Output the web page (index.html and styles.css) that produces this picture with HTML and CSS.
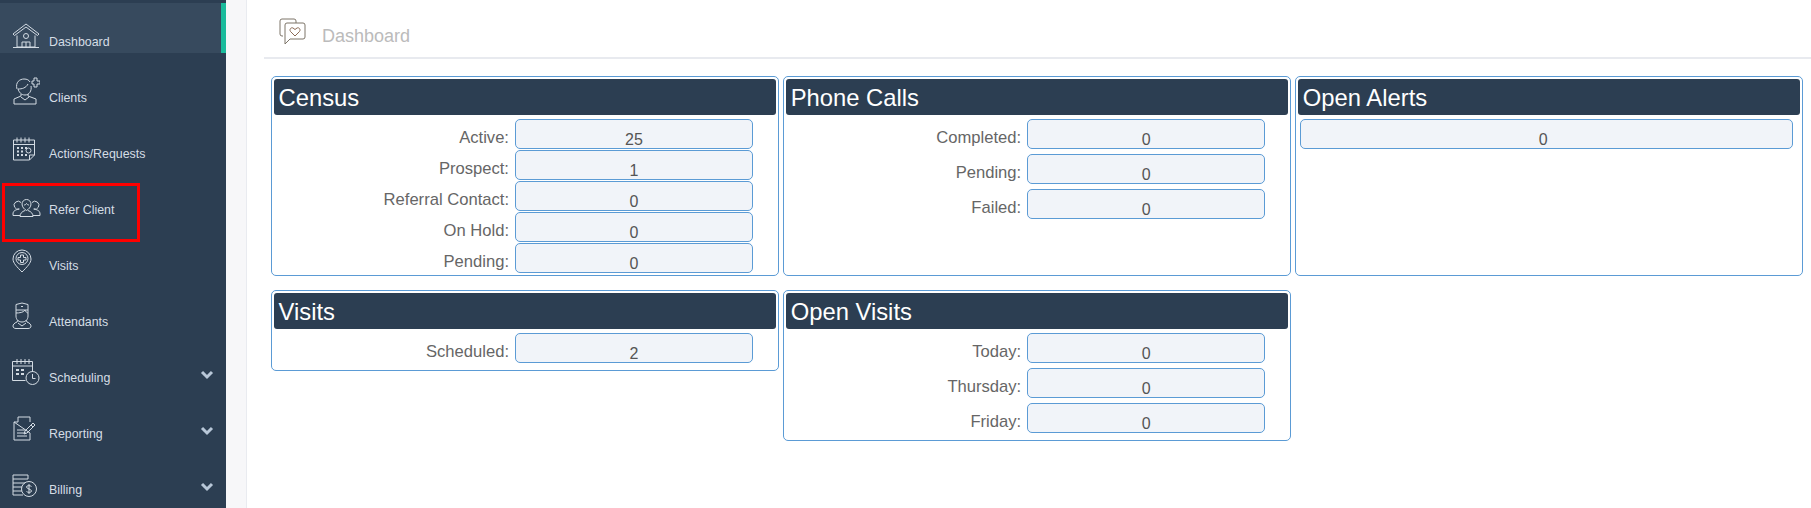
FILE: index.html
```html
<!DOCTYPE html>
<html lang="en">
<head>
    <meta charset="UTF-8">
    <title>Dashboard</title>
    <link rel="stylesheet" href="styles.css">
</head>
<body>
<div class="app-wrap">
    <aside class="sidebar">
        <a class="nav-item active">
            <svg class="nav-icon" width="28" height="26" viewBox="0 0 28 26"><path d="M1 11 14 1l13 10-1.500 1.500L14 4 2.500 12.500zM5 12.500V24h18V12.500M1 24.500h26M10 24v-5h8v5M14 19v5"/><circle cx="14" cy="13" r="2.500"/></svg>
            <span>Dashboard</span>
        </a>
        <a class="nav-item">
            <svg class="nav-icon" width="28" height="28" viewBox="0 0 28 28"><path d="M5 12C3 5 8 2 12 2c3 0 5 1 6 3M19 9c1 5-2 9-6 9s-6-3-7-6c4 0 8-1 10-5M9 17v2l-7 3v5h22v-5l-8-3v-2M9 20l4 3 4-3M20 4h2V1h3v3h3v3h-3v3h-3V7h-2z"/></svg>
            <span>Clients</span>
        </a>
        <a class="nav-item">
            <svg class="nav-icon" width="24" height="24" viewBox="0 0 24 24"><path d="M1.500 23V3h21v15l-5 5zM1.500 7.500h21M5 .5v5M9 .5v5M13 .5v5M17 .5v5M22.500 18h-5v5"/><path class="dots" d="M5 11h2M9 11h2M13 11h2M5 14.500h2M9 14.500h2M5 18h2M9 18h2M13 18h2"/><circle cx="16.500" cy="13.500" r="2.500"/></svg>
            <span>Actions/Requests</span>
        </a>
        <a class="nav-item">
            <svg class="nav-icon" width="29" height="19" viewBox="0 0 29 19"><path d="M9 4.500a4 4 0 1 0-1.500 6.500M20 4.500a4 4 0 1 1 1.500 6.500M10 6a4.500 4.500 0 0 1 9 0c0 3-2.500 5.500-4.500 6.500C12.500 11.500 10 9 10 6zM12 7c1 0 2-.5 2.500-1.500.5 1 1.500 1.500 2.500 1.500M1 16c0-3 2-4 6-5M28 16c0-3-2-4-6-5M1 16v1.500h7M28 16v1.500h-7M8 18.500c0-3 2-5 5-6M21 18.500c0-3-2-5-5-6M8 18.500h13"/></svg>
            <span>Refer Client</span>
        </a>
        <a class="nav-item">
            <svg class="nav-icon" width="20" height="24" viewBox="0 0 20 24"><path d="M10 23C5 18 1 14 1 10a9 9 0 0 1 18 0c0 4-4 8-9 13z"/><circle cx="10" cy="9.500" r="6"/><path d="M8.500 6h3v2.500H14v2.500h-2.500v2.500h-3V11H6V8.500h2.500z"/></svg>
            <span>Visits</span>
        </a>
        <a class="nav-item">
            <svg class="nav-icon" width="20" height="27" viewBox="0 0 20 27"><path d="M4 2.500 10 1l6 1.500V8H4zM4 8v6c0 4 3 6 6 6s6-2 6-6V8M4 11c3 0 8-.5 9-3 .5 1.500 2 3 3 3M6 18l-1 2c-3 1-4 3-4 4 0 1.500 1 2.500 3 2.500h12c2 0 3-1 3-2.500 0-1-1-3-4-4l-1-2M6 21l4 3 4-3M9 4.500h2"/></svg>
            <span>Attendants</span>
        </a>
        <a class="nav-item has-sub">
            <svg class="nav-icon" width="28" height="27" viewBox="0 0 28 27"><path d="M20.500 14V3.500H.5v19h13M.5 8h20M5 1v5M9 1v5M13 1v5M17 1v5"/><path class="dots" d="M4 12h3M9 12h3M4 16h3M9 16h3"/><circle cx="20.500" cy="20" r="6.500"/><path d="M20.500 16v4.500h3"/></svg>
            <span>Scheduling</span>
            <svg class="chevron" width="14" height="10" viewBox="0 0 14 10"><path d="M2 2l5 5 5-5"/></svg>
        </a>
        <a class="nav-item has-sub">
            <svg class="nav-icon" width="24" height="25" viewBox="0 0 24 25"><path d="M6 1h12v5M18 17v7H2V6zM6 1v5H2M5 14h8M5 17h9M5 20h10"/><path d="M13 15l-1 3 3-1 8-8-2-2zM19 9l2 2"/></svg>
            <span>Reporting</span>
            <svg class="chevron" width="14" height="10" viewBox="0 0 14 10"><path d="M2 2l5 5 5-5"/></svg>
        </a>
        <a class="nav-item has-sub">
            <svg class="nav-icon" width="25" height="23" viewBox="0 0 25 23"><path d="M1 1h15v4H1zM1 5v16h10M1 9h12M1 13h9M1 17h9"/><circle cx="17" cy="15" r="7.500"/><path d="M19.500 12.500c-1-1-5-1.500-5 .5s5 2 5 4-4 1.500-5 .5M17 10v10"/></svg>
            <span>Billing</span>
            <svg class="chevron" width="14" height="10" viewBox="0 0 14 10"><path d="M2 2l5 5 5-5"/></svg>
        </a>
        <div class="highlight"></div>
    </aside>

    <div class="gutter"></div>

    <main class="content">
        <header class="page-head">
            <svg class="page-icon" width="27" height="27" viewBox="0 0 27 27"><path d="M4 18H3a2 2 0 0 1-2-2V3a2 2 0 0 1 2-2h12a2 2 0 0 1 2 2v2"/><path d="M8 5h16a2 2 0 0 1 2 2v12a2 2 0 0 1-2 2H11l-5 5V7a2 2 0 0 1 2-2z"/><path class="heart" d="M16 18l-4.500-4.500c-1.500-2 .5-4.500 2.500-3.500l2 1.500 2-1.500c2-1 4 1.500 2.500 3.500z"/></svg>
            <h1>Dashboard</h1>
        </header>

        <div class="cards">
            <section class="card census">
                <h2>Census</h2>
                <div class="row"><label>Active:</label><div class="value">25</div></div>
                <div class="row"><label>Prospect:</label><div class="value">1</div></div>
                <div class="row"><label>Referral Contact:</label><div class="value">0</div></div>
                <div class="row"><label>On Hold:</label><div class="value">0</div></div>
                <div class="row"><label>Pending:</label><div class="value">0</div></div>
            </section>
            <section class="card">
                <h2>Phone Calls</h2>
                <div class="row"><label>Completed:</label><div class="value">0</div></div>
                <div class="row"><label>Pending:</label><div class="value">0</div></div>
                <div class="row"><label>Failed:</label><div class="value">0</div></div>
            </section>
            <section class="card">
                <h2>Open Alerts</h2>
                <div class="row single"><div class="value">0</div></div>
            </section>
            <section class="card short">
                <h2>Visits</h2>
                <div class="row"><label>Scheduled:</label><div class="value">2</div></div>
            </section>
            <section class="card">
                <h2>Open Visits</h2>
                <div class="row"><label>Today:</label><div class="value">0</div></div>
                <div class="row"><label>Thursday:</label><div class="value">0</div></div>
                <div class="row"><label>Friday:</label><div class="value">0</div></div>
            </section>
        </div>
    </main>
</div>
</body>
</html>
```
FILE: styles.css
```css
* {
  margin: 0;
  padding: 0;
  box-sizing: border-box;
}

body {
  font-family: "Liberation Sans", Arial, sans-serif;
  background-color: #fff;
  overflow: hidden;
}

.app-wrap {
  display: flex;
  height: 508px;
  overflow: hidden;
}

/* sidebar */
.sidebar {
  position: relative;
  flex: 0 0 226px;
  background-color: #2c3e52;
  padding-top: 3px;
  overflow: hidden;
}

.nav-item {
  display: flex;
  align-items: flex-end;
  position: relative;
  height: 50px;
  margin-bottom: 6px;
  padding-bottom: 4px;
  color: #d5dde5;
  font-size: 12.4px;
}

.nav-item span {
  position: absolute;
  left: 49px;
  top: 32px;
  line-height: 14px;
}

.nav-item.active {
  background-color: #374a5e;
  border-right: 5px solid #1abb9c;
}

.nav-icon {
  margin-left: 12px;
  fill: none;
  stroke: #d3dbe3;
  stroke-width: 1;
}

.nav-icon .dots {
  stroke-width: 2;
}

.chevron {
  position: absolute;
  left: 200px;
  top: 31px;
  fill: none;
  stroke: #b8c7d8;
  stroke-width: 3;
}

.highlight {
  position: absolute;
  left: 2px;
  top: 183px;
  width: 138px;
  height: 59px;
  border: 3px solid #f00;
}

.gutter {
  flex: 0 0 21px;
  background-color: #f7f7f9;
  border-right: 1px solid #e9ebf0;
}

/* main */
.content {
  flex: 1;
  padding: 0 0 0 17px;
}

.page-head {
  display: flex;
  align-items: flex-end;
  height: 59px;
  padding: 0 0 10px 15px;
  border-bottom: 2px solid #e8eaef;
}

.page-icon {
  margin-bottom: 2px;
  fill: none;
  stroke: #7d7468;
  stroke-width: 1;
}

.page-icon .heart {
  stroke: #8a6a55;
}

.page-head h1 {
  margin-left: 16px;
  color: #bbb;
  font-size: 18px;
  font-weight: normal;
}

.cards {
  display: grid;
  grid-template-columns: repeat(3, 1fr);
  gap: 14px 4.500px;
  margin: 17px 8px 0 7px;
}

.card {
  padding: 2px;
  border: 1px solid #5b9bd5;
  border-radius: 5px;
}

.card.short {
  align-self: start;
}

.card h2 {
  height: 36px;
  margin-bottom: 4px;
  padding-left: 4.500px;
  background-color: #2c3e52;
  border-radius: 3px;
  color: #fff;
  font-size: 23.800px;
  font-weight: normal;
  line-height: 38px;
}

.row {
  display: grid;
  grid-template-columns: 235px 238px;
  column-gap: 6px;
  height: 30px;
  margin-bottom: 5px;
}

.census .row {
  margin-bottom: 1px;
}

.census .row:last-child {
  margin-bottom: 0;
}

.row label {
  color: #666;
  font-size: 16.600px;
  line-height: 38px;
  text-align: right;
}

.value {
  height: 30px;
  background-color: #f1f4f9;
  border: 1px solid #5b9bd5;
  border-radius: 5px;
  color: #555;
  font-size: 16px;
  line-height: 39px;
  overflow: hidden;
  text-align: center;
}

.row.single {
  display: block;
  margin: 0 7px 0 2px;
}

.row.single .value {
  padding-right: 7px;
}
```
